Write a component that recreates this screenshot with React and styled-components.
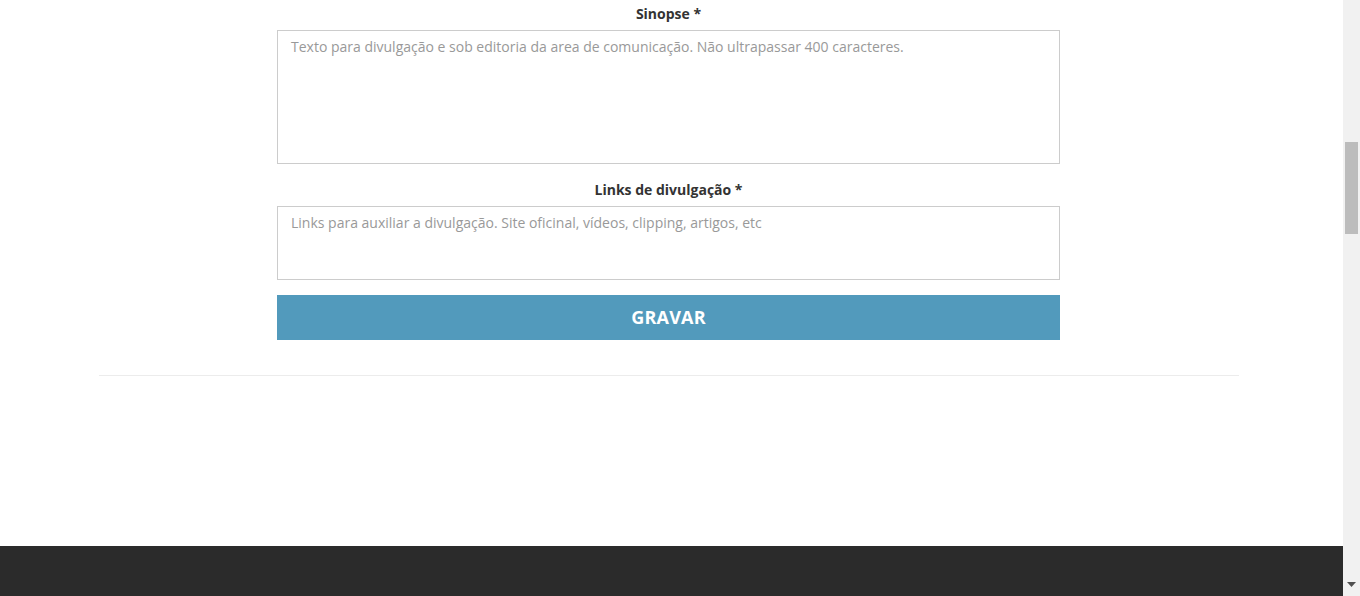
import React from "react";
import styled, { createGlobalStyle } from "styled-components";

const GlobalStyle = createGlobalStyle`
  html, body {
    margin: 0;
    padding: 0;
    background: #fff;
    overflow: hidden;
  }
  body {
    font-family: "Open Sans", "Liberation Sans", sans-serif;
    color: #333;
  }
`;

export default function App() {
  return (
    <Frame>
      <GlobalStyle />
      <Page>
        <Container>
          <Form>
            <Label>Sinopse *</Label>
            <TextArea
              rows={6}
              height={134}
              placeholder="Texto para divulgação e sob editoria da area de comunicação. Não ultrapassar 400 caracteres."
            />
            <Label spaced>Links de divulgação *</Label>
            <TextArea
              rows={3}
              height={74}
              placeholder="Links para auxiliar a divulgação. Site oficinal, vídeos, clipping, artigos, etc"
            />
            <Button type="button">GRAVAR</Button>
          </Form>
          <Rule />
        </Container>
        <Footer />
      </Page>
      <ScrollBar>
        <Track>
          <Thumb />
        </Track>
        <Arrow>
          <svg width="9" height="5" viewBox="0 0 9 5">
            <path d="M0 0 H9 L4.5 5 Z" fill="#505050" />
          </svg>
        </Arrow>
      </ScrollBar>
    </Frame>
  );
}

const Frame = styled.div`
  display: flex;
  width: 1360px;
  height: 596px;
  overflow: hidden;
`;

const Page = styled.div`
  flex: 1;
  display: flex;
  flex-direction: column;
  min-width: 0;
`;

const Container = styled.div`
  width: 1140px;
  margin: 0 auto;
  flex: 1;
  transform: translateX(-3px);
`;

const Form = styled.form`
  width: 783px;
  margin: 0 auto;
  padding-top: 4px;
  display: flex;
  flex-direction: column;
`;

const Label = styled.label`
  display: block;
  text-align: center;
  font-size: 14px;
  font-weight: 700;
  line-height: 20px;
  color: #333;
  margin-top: ${(p) => (p.spaced ? "16px" : "0")};
  margin-bottom: 6px;
`;

const TextArea = styled.textarea`
  box-sizing: border-box;
  width: 100%;
  height: ${(p) => p.height}px;
  margin: 0;
  padding: 6px 13px;
  border: 1px solid #cccccc;
  border-radius: 0;
  font-family: "Open Sans", "Liberation Sans", sans-serif;
  font-size: 14px;
  line-height: 20px;
  color: #555;
  resize: none;
  outline: none;
  background: #fff;

  &::placeholder {
    color: #999;
    opacity: 1;
  }
`;

const Button = styled.button`
  margin-top: 15px;
  height: 45px;
  width: 100%;
  padding: 0 0 2px;
  border: none;
  border-radius: 0;
  background: #529abc;
  color: #fff;
  font-family: "Open Sans", "Liberation Sans", sans-serif;
  font-size: 18px;
  font-weight: 700;
  letter-spacing: 0.2px;
  cursor: pointer;
`;

const Rule = styled.hr`
  margin: 35px 0 0;
  border: none;
  border-top: 1px solid #ececec;
  height: 0;
`;

const Footer = styled.footer`
  height: 50px;
  background: #2b2b2b;
  flex-shrink: 0;
`;

const ScrollBar = styled.div`
  width: 17px;
  background: #f1f1f1;
  display: flex;
  flex-direction: column;
`;

const Track = styled.div`
  flex: 1;
  padding-top: 142px;
  display: flex;
  justify-content: center;
`;

const Thumb = styled.div`
  width: 13px;
  height: 92px;
  background: #bcbcbc;
`;

const Arrow = styled.div`
  height: 14px;
  display: flex;
  align-items: flex-start;
  justify-content: center;
`;
